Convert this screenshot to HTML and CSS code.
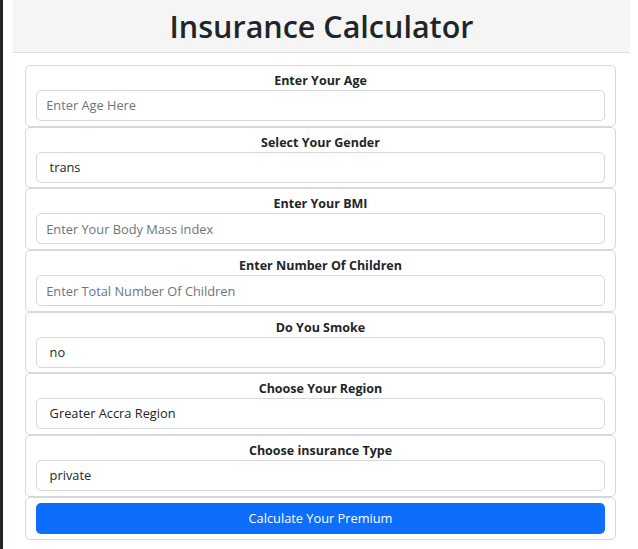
FILE: index.html
```html
<!DOCTYPE html>
<html lang="en">
<head>
<meta charset="utf-8">
<title>Insurance Calculator</title>
<link rel="stylesheet" href="styles.css">
</head>
<body>
<div class="sidebar"></div>
<div class="main">
  <header class="header">
    <h1 class="title">Insurance Calculator</h1>
  </header>
  <form class="form">
    <div class="card">
      <label class="label" for="age">Enter Your Age</label>
      <input class="control" id="age" type="text" placeholder="Enter Age Here">
    </div>
    <div class="card">
      <label class="label" for="gender">Select Your Gender</label>
      <select class="control select" id="gender"><option>trans</option></select>
    </div>
    <div class="card">
      <label class="label" for="bmi">Enter Your BMI</label>
      <input class="control" id="bmi" type="text" placeholder="Enter Your Body Mass index">
    </div>
    <div class="card">
      <label class="label" for="children">Enter Number Of Children</label>
      <input class="control" id="children" type="text" placeholder="Enter Total Number Of Children">
    </div>
    <div class="card">
      <label class="label" for="smoke">Do You Smoke</label>
      <select class="control select" id="smoke"><option>no</option></select>
    </div>
    <div class="card">
      <label class="label" for="region">Choose Your Region</label>
      <select class="control select" id="region"><option>Greater Accra Region</option></select>
    </div>
    <div class="card">
      <label class="label" for="type">Choose insurance Type</label>
      <select class="control select" id="type"><option>private</option></select>
    </div>
    <div class="card">
      <button class="button" type="button">Calculate Your Premium</button>
    </div>
  </form>
</div>
</body>
</html>
```
FILE: styles.css
```css
html, body {
  margin: 0;
  height: 100%;
}
body {
  display: flex;
  background: #fff;
  font-family: "Open Sans", "Noto Sans", sans-serif;
  color: #212529;
}
.sidebar {
  width: 3px;
  flex: none;
  background: #212529;
}
.main {
  flex: 1;
  padding: 0 8px 0 10px;
}
.header {
  background: #f5f5f5;
  border-bottom: 1px solid #dcdcdc;
  height: 52px;
  display: flex;
  align-items: center;
  justify-content: center;
}
.title {
  margin: 0;
  font-size: 30.5px;
  font-weight: 600;
  line-height: 1.2;
  color: #212529;
}
.form {
  margin: 12px 14px 0 12px;
}
.card {
  border: 1px solid #d6d8db;
  border-radius: 5px;
  padding: 4.85px 9.6px;
  display: flex;
  flex-direction: column;
}
.label {
  display: block;
  text-align: center;
  font-size: 12.5px;
  font-weight: 700;
  line-height: 19.2px;
}
.control {
  box-sizing: border-box;
  height: 30.8px;
  width: 100%;
  margin: 0;
  padding: 4.8px 9.6px;
  font: inherit;
  font-size: 12.8px;
  line-height: 19.2px;
  color: #212529;
  background: #fff;
  border: 1px solid #d6d8db;
  border-radius: 5px;
  outline: none;
}
.control::placeholder {
  color: #6c757d;
}
.select {
  appearance: none;
  -webkit-appearance: none;
  padding-left: 13px;
}
.button {
  height: 31px;
  width: 100%;
  border: none;
  border-radius: 5px;
  background: #0d6efd;
  color: #fff;
  font: inherit;
  font-size: 12.8px;
}
```
